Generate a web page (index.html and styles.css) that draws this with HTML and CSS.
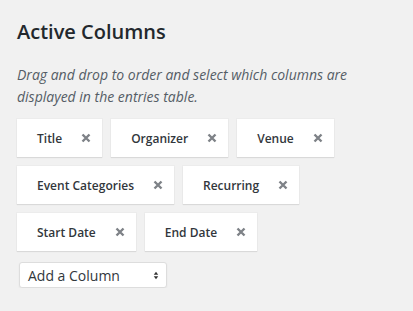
FILE: index.html
```html
<!DOCTYPE html>
<html>
<head>
<meta charset="utf-8">
<link rel="stylesheet" href="styles.css">
</head>
<body>
<div class="panel">
  <h2 class="title">Active Columns</h2>
  <p class="desc">Drag and drop to order and select which columns are displayed in the entries table.</p>
  <div class="chips">
    <div class="chip"><span>Title</span><svg class="x" viewBox="0 0 10 10"><path d="M1.5 1.5L8.5 8.5M8.5 1.5L1.5 8.5"/></svg></div>
    <div class="chip"><span>Organizer</span><svg class="x" viewBox="0 0 10 10"><path d="M1.5 1.5L8.5 8.5M8.5 1.5L1.5 8.5"/></svg></div>
    <div class="chip"><span>Venue</span><svg class="x" viewBox="0 0 10 10"><path d="M1.5 1.5L8.5 8.5M8.5 1.5L1.5 8.5"/></svg></div>
    <div class="chip"><span>Event Categories</span><svg class="x" viewBox="0 0 10 10"><path d="M1.5 1.5L8.5 8.5M8.5 1.5L1.5 8.5"/></svg></div>
    <div class="chip"><span>Recurring</span><svg class="x" viewBox="0 0 10 10"><path d="M1.5 1.5L8.5 8.5M8.5 1.5L1.5 8.5"/></svg></div>
    <div class="chip"><span>Start Date</span><svg class="x" viewBox="0 0 10 10"><path d="M1.5 1.5L8.5 8.5M8.5 1.5L1.5 8.5"/></svg></div>
    <div class="chip"><span>End Date</span><svg class="x" viewBox="0 0 10 10"><path d="M1.5 1.5L8.5 8.5M8.5 1.5L1.5 8.5"/></svg></div>
  </div>
  <div class="select">
    <span>Add a Column</span>
    <svg class="arrows" viewBox="0 0 8 12"><path d="M4 1L7 5H1Z M4 11L7 7H1Z"/></svg>
  </div>
</div>
</body>
</html>
```
FILE: styles.css
```css
html, body {
  margin: 0;
  padding: 0;
  background: #f1f1f1;
}
.panel {
  padding: 18px 17px 0 17px;
  font-family: "Open Sans", "Noto Sans", sans-serif;
}
.title {
  margin: 0;
  font-size: 20px;
  font-weight: 600;
  line-height: 28px;
  color: #23282d;
}
.desc {
  margin: 18px 0 0 0;
  font-size: 14px;
  font-style: italic;
  line-height: 22px;
  color: #555d66;
}
.chips {
  display: flex;
  flex-wrap: wrap;
  gap: 9px;
  margin-top: 11px;
  width: 379px;
}
.chip {
  display: flex;
  align-items: center;
  height: 38px;
  box-sizing: border-box;
  padding: 0 11px 0 20px;
  background: #fff;
  box-shadow: 0 1px 1px rgba(0,0,0,0.08), 0 0 0 1px rgba(0,0,0,0.02);
  font-size: 12px;
  font-weight: 600;
  color: #32373c;
}
.chip span {
  margin-right: 19px;
}
.x {
  width: 10px;
  height: 10px;
  stroke: #7e8287;
  stroke-width: 2.4;
  fill: none;
}
.select {
  display: flex;
  align-items: center;
  justify-content: space-between;
  margin: 11px 0 0 2px;
  width: 148px;
  height: 26px;
  box-sizing: border-box;
  padding: 0 7px 0 8px;
  background: #fff;
  border: 1px solid #ddd;
  border-radius: 3px;
  box-shadow: 0 1px 2px rgba(0,0,0,0.05);
  font-size: 14px;
  color: #32373c;
}
.arrows {
  width: 6px;
  height: 11px;
  fill: #333;
}
```
